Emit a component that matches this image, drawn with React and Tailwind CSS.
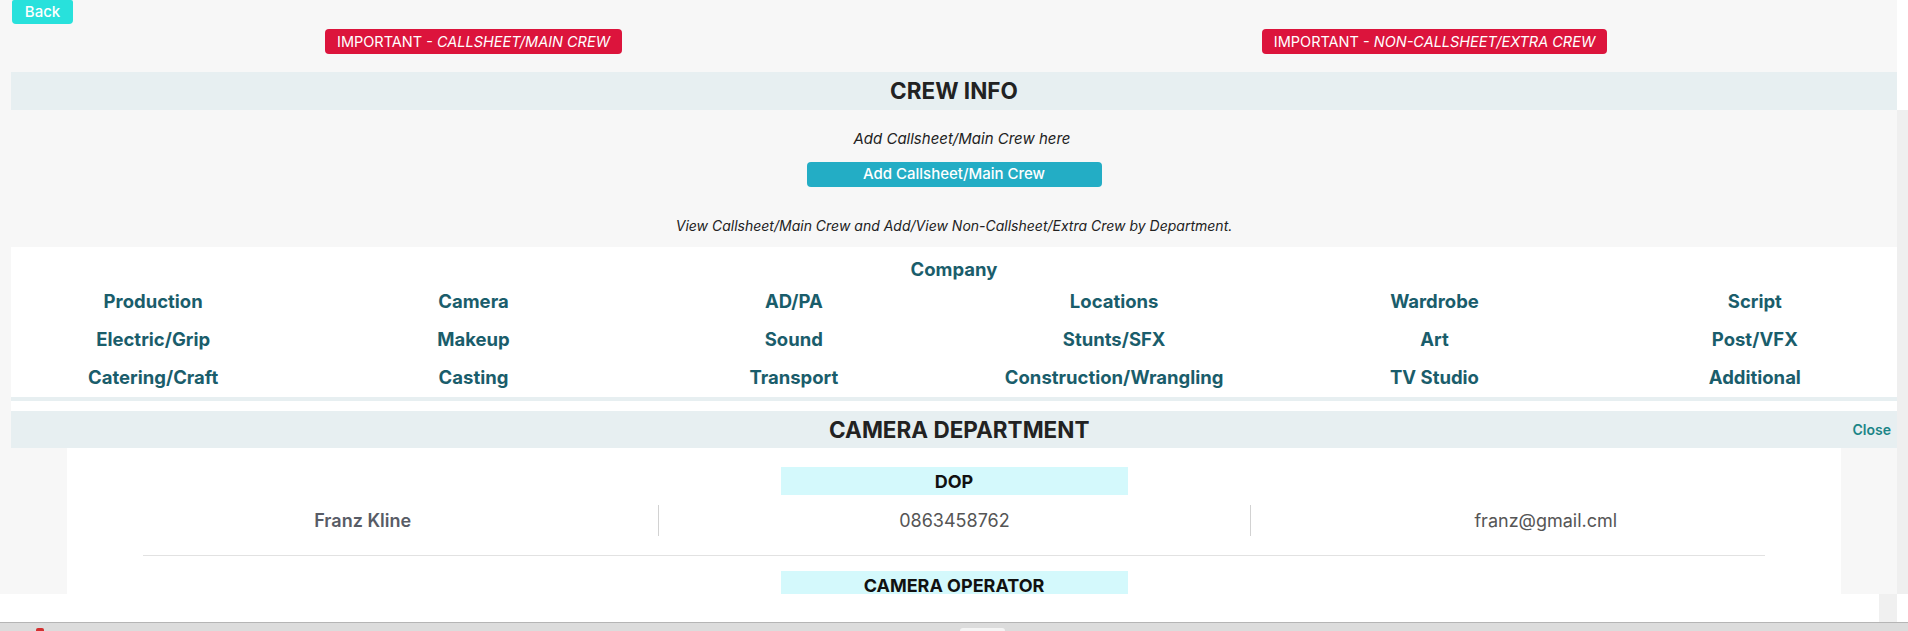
import React from "react";

const rows = [
  ["Production", "Camera", "AD/PA", "Locations", "Wardrobe", "Script"],
  ["Electric/Grip", "Makeup", "Sound", "Stunts/SFX", "Art", "Post/VFX"],
  ["Catering/Craft", "Casting", "Transport", "Construction/Wrangling", "TV Studio", "Additional"],
];

export default function App() {
  return (
    <div className="w-[1908px] h-[631px] overflow-hidden bg-white flex flex-col font-['Inter',sans-serif]">
      <div className="flex h-[622px]">
        <div className="w-[1897px] flex flex-col">
          <div className="h-[594px] bg-[#f7f7f7] overflow-hidden flex flex-col">
            <div className="ml-[12px] w-[61px] h-[24px] shrink-0 rounded-b-[4px] rounded-t-[2px] bg-[#28e1dc] text-white text-[15px] font-medium flex items-center justify-center">
              Back
            </div>
            <div className="mt-[5px] -ml-[7px] w-[1922px] shrink-0 grid grid-cols-2">
              <div className="flex justify-center">
                <div className="h-[25px] px-[12px] rounded-[4px] bg-[#dc143c] text-white text-[14.5px] flex items-center">
                  IMPORTANT -&nbsp;<span className="italic">CALLSHEET/MAIN CREW</span>
                </div>
              </div>
              <div className="flex justify-center">
                <div className="h-[25px] px-[12px] rounded-[4px] bg-[#dc143c] text-white text-[14.5px] flex items-center">
                  IMPORTANT -&nbsp;<span className="italic">NON-CALLSHEET/EXTRA CREW</span>
                </div>
              </div>
            </div>
            <div className="ml-[11px] flex flex-col shrink-0">
              <div className="mt-[18px] h-[38px] bg-[#e7eff1] flex items-center justify-center text-[22.5px] font-bold text-[#222]">
                CREW INFO
              </div>
              <div className="mt-[20px] h-[18px] pl-[16px] leading-[18px] text-center italic text-[15px] text-[#222]">
                Add Callsheet/Main Crew here
              </div>
              <div className="mt-[14px] mx-auto w-[295px] h-[25px] rounded-[4px] bg-[#23adc5] text-white text-[15px] font-medium flex items-center justify-center">
                Add Callsheet/Main Crew
              </div>
              <div className="mt-[30px] h-[18px] leading-[18px] text-center italic text-[14px] text-[#222]">
                View Callsheet/Main Crew and Add/View Non-Callsheet/Extra Crew by Department.
              </div>
              <div className="mt-[12px] bg-white pb-[10px]">
                <div className="border-b-[4px] border-[#e7eff1] pt-[10px]">
                  <div className="h-[26px] flex items-center justify-center text-[18.5px] font-bold text-[#1a5d6b]">
                    Company
                  </div>
                  <div className="-ml-[18px] w-[1922px] grid grid-cols-6">
                    {rows.flat().map((d) => (
                      <div key={d} className="h-[38px] flex items-center justify-center text-[18.5px] font-bold text-[#1a5d6b]">
                        {d}
                      </div>
                    ))}
                  </div>
                </div>
              </div>
              <div className="h-[37px] bg-[#e7eff1] flex items-center">
                <div className="flex-1 pl-[55px] text-center text-[22.5px] font-bold text-[#222]">
                  CAMERA DEPARTMENT
                </div>
                <div className="mr-[6px] text-[14px] font-semibold text-[#1b8587]">Close</div>
              </div>
            </div>
            <div className="ml-[67px] w-[1774px] flex-1 bg-white flex flex-col pt-[19px]">
              <div className="mx-auto w-[347px] h-[28px] shrink-0 bg-[#d4f9fc] flex items-center justify-center text-[18px] font-bold text-[#111]">
                DOP
              </div>
              <div className="mt-[10px] h-[31px] shrink-0 grid grid-cols-3 text-[18px]">
                <div className="flex items-center justify-center font-semibold text-[#585c66]">Franz Kline</div>
                <div className="flex items-center justify-center border-l border-[#d2d2d2] text-[#555]">0863458762</div>
                <div className="flex items-center justify-center border-l border-[#d2d2d2] text-[#555]">franz@gmail.cml</div>
              </div>
              <div className="mt-[19px] mx-auto w-[1622px] h-px shrink-0 bg-[#e2e2e2]" />
              <div className="mt-[15px] mx-auto w-[347px] h-[28px] shrink-0 bg-[#d4f9fc] flex items-center justify-center text-[18px] font-bold text-[#111]">
                CAMERA OPERATOR
              </div>
            </div>
          </div>
          <div className="flex-1 flex justify-end">
            <div className="w-[18px] bg-[#f0f0f0]" />
          </div>
        </div>
        <div className="w-[11px] flex flex-col">
          <div className="h-[110px] bg-white" />
          <div className="h-[484px] bg-[#efefef]" />
        </div>
      </div>
      <div className="h-[9px] border-t border-[#b5b5b5] bg-[#dcdcdc] flex items-end">
        <div className="ml-[36px] w-[8px] h-[3px] bg-[#d32f2f] rounded-t-[2px]" />
        <div className="ml-[916px] w-[45px] h-[3px] bg-[#f4f4f4] rounded-t-[3px]" />
      </div>
    </div>
  );
}
